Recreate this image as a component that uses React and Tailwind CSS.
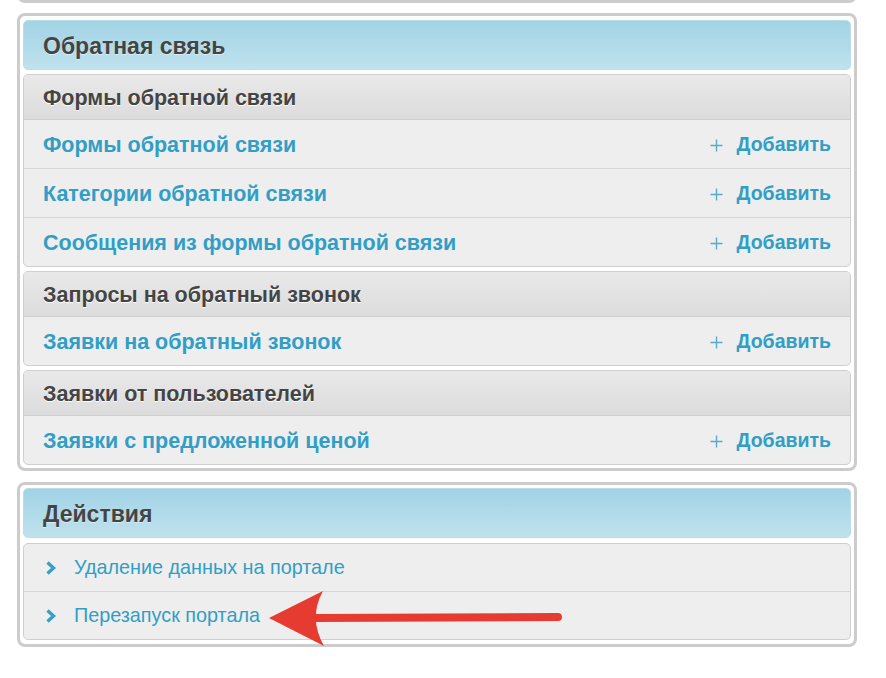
import React from 'react';

const groups = [
    {
        title: 'Формы обратной связи',
        items: ['Формы обратной связи', 'Категории обратной связи', 'Сообщения из формы обратной связи'],
    },
    {
        title: 'Запросы на обратный звонок',
        items: ['Заявки на обратный звонок'],
    },
    {
        title: 'Заявки от пользователей',
        items: ['Заявки с предложенной ценой'],
    },
];

const actions = ['Удаление данных на портале', 'Перезапуск портала'];

const PanelHeader = ({ children }) => (
    <div className="h-[50px] flex items-center px-[19px] pt-[2px] rounded-[5px] border border-[#b9dde9] bg-gradient-to-b from-[#a1d3e5] to-[#bfe2ee] text-[23px] font-bold text-[#444] [text-shadow:0_1px_0_rgba(255,255,255,0.5)]">
        {children}
    </div>
);

const Plus = () => (
    <svg width="13" height="13" viewBox="0 0 13 13" className="mr-[14px]">
        <path d="M6.5 0.5v12M0.5 6.5h12" stroke="#5aa9c9" strokeWidth="1.4" />
    </svg>
);

const Chevron = () => (
    <svg width="12" height="14" viewBox="0 0 12 14" className="mr-[17px]">
        <path d="M2.5 1.5l6 5.5-6 5.5" fill="none" stroke="#3a9fc8" strokeWidth="3.4" strokeLinejoin="miter" />
    </svg>
);

const App = () => {
    return (
        <div className="min-h-[678px] bg-white font-['Liberation_Sans',Arial,sans-serif]">
            <div className="w-[840px] ml-[17px]">
                {/* bottom edge of the panel above */}
                <div className="-mt-[20px] h-[23px] border-[3px] border-[#cccccc] rounded-[8px]" />

                <div className="mt-[10px] border-[3px] border-[#cccccc] rounded-[8px] px-[3px] pt-[4px] pb-[3px]">
                    <PanelHeader>Обратная связь</PanelHeader>
                    <div className="flex flex-col gap-[4px] mt-[4px]">
                        {groups.map((g) => (
                            <div key={g.title} className="border border-[#cfcfcf] rounded-[5px] bg-[#eeeeee] overflow-hidden">
                                <div className="h-[45px] flex items-center px-[19px] pt-[2px] border-b border-[#cfcfcf] bg-gradient-to-b from-[#e9e9e9] to-[#dcdcdc] text-[21.5px] font-bold text-[#444] [text-shadow:0_1px_0_#fff]">
                                    {g.title}
                                </div>
                                {g.items.map((item, i) => (
                                    <div
                                        key={item}
                                        className={`flex items-center justify-between pl-[19px] pr-[19px] pt-[2px] text-[21.5px] font-bold text-[#319ec6] ${i > 0 ? 'border-t border-[#d6d6d6] h-[49px]' : 'h-[48px]'}`}
                                    >
                                        <span>{item}</span>
                                        <span className="flex items-center text-[19.5px]">
                                            <Plus />
                                            Добавить
                                        </span>
                                    </div>
                                ))}
                            </div>
                        ))}
                    </div>
                </div>

                <div className="mt-[11px] border-[3px] border-[#cccccc] rounded-[8px] px-[3px] pt-[3px] pb-[4px]">
                    <PanelHeader>Действия</PanelHeader>
                    <div className="mt-[5px] border border-[#cfcfcf] rounded-[5px] bg-[#eeeeee]">
                        {actions.map((a, i) => (
                            <div
                                key={a}
                                className={`flex items-center pl-[21px] text-[19.8px] text-[#319ec6] ${i > 0 ? 'border-t border-[#d6d6d6] h-[48px]' : 'h-[47px]'}`}
                            >
                                <Chevron />
                                {a}
                            </div>
                        ))}
                    </div>
                </div>
            </div>

            {/* red annotation arrow */}
            <svg className="absolute left-0 top-0 pointer-events-none" width="886" height="678">
                <line x1="313" y1="618" x2="558" y2="617" stroke="#e53b30" strokeWidth="8" strokeLinecap="round" />
                <path d="M269 618 L323 591 Q308 618 324 646 Z" fill="#e53b30" />
            </svg>
        </div>
    );
};

export default App;
